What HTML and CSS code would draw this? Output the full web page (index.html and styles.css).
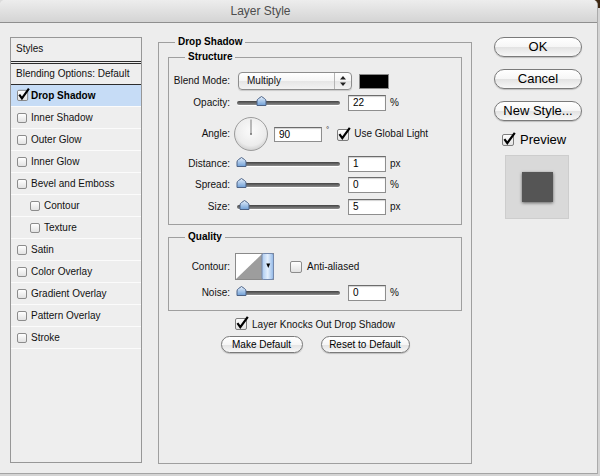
FILE: index.html
```html
<!DOCTYPE html>
<html lang="en">

<head>
	<meta charset="UTF-8">
	<meta name="viewport" content="width=device-width, initial-scale=1.0">
	<title>Layer Style</title>
	<link rel="stylesheet" href="styles.css">
</head>

<body>
	<svg class="defs" width="0" height="0">
		<defs>
			<linearGradient id="thumbFill" x1="0" y1="0" x2="0" y2="1">
				<stop offset="0" stop-color="#e6f0fc" />
				<stop offset="1" stop-color="#6f9fd6" />
			</linearGradient>
			<linearGradient id="aqua" x1="0" y1="0" x2="1" y2="0">
				<stop offset="0" stop-color="#a9c9f0" />
				<stop offset="0.5" stop-color="#e4effc" />
				<stop offset="1" stop-color="#8fb6e6" />
			</linearGradient>
			<radialGradient id="dialFill" cx="0.5" cy="0.4" r="0.6">
				<stop offset="0" stop-color="#fbfbfb" />
				<stop offset="0.75" stop-color="#ececec" />
				<stop offset="1" stop-color="#cfcfcf" />
			</radialGradient>
			<linearGradient id="boxFill" x1="0" y1="0" x2="0" y2="1">
				<stop offset="0" stop-color="#ffffff" />
				<stop offset="1" stop-color="#e2e2e2" />
			</linearGradient>
		</defs>
	</svg>

	<div class="window">
		<div class="titlebar">Layer Style</div>

		<div class="dialog">
			<!-- effects list -->
			<ul class="styles">
				<li class="styles__head">Styles</li>
				<li class="styles__blend">Blending Options: Default</li>
				<li class="styles__item styles__item--active">
					<svg class="check check--small" width="13" height="13" viewBox="0 0 14 14">
						<rect x="0.5" y="2.5" width="11" height="11" rx="1.5" fill="url(#boxFill)" stroke="#7d7d7d" />
						<path d="M2.4 7.2 L5.3 11.2 L12.8 0.8" fill="none" stroke="#000" stroke-width="2.3" />
					</svg>
					Drop Shadow
				</li>
				<li class="styles__item"><span class="box"></span>Inner Shadow</li>
				<li class="styles__item"><span class="box"></span>Outer Glow</li>
				<li class="styles__item"><span class="box"></span>Inner Glow</li>
				<li class="styles__item"><span class="box"></span>Bevel and Emboss</li>
				<li class="styles__item styles__item--sub"><span class="box"></span>Contour</li>
				<li class="styles__item styles__item--sub"><span class="box"></span>Texture</li>
				<li class="styles__item"><span class="box"></span>Satin</li>
				<li class="styles__item"><span class="box"></span>Color Overlay</li>
				<li class="styles__item"><span class="box"></span>Gradient Overlay</li>
				<li class="styles__item"><span class="box"></span>Pattern Overlay</li>
				<li class="styles__item"><span class="box"></span>Stroke</li>
			</ul>

			<!-- drop shadow settings -->
			<fieldset class="group group--main">
				<legend>Drop Shadow</legend>

				<fieldset class="group group--sub">
					<legend>Structure</legend>

					<div class="row row--blend">
						<span class="row__label">Blend Mode:</span>
						<div class="select">
							<span class="select__value">Multiply</span>
							<span class="select__arrows">
								<svg width="6" height="10" viewBox="0 0 6 10">
									<path d="M3 0 L6 3.5 H0 Z M0 6.5 H6 L3 10 Z" fill="#222" />
								</svg>
							</span>
						</div>
						<span class="swatch"></span>
					</div>

					<div class="row">
						<span class="row__label">Opacity:</span>
						<div class="slider">
							<svg class="slider__thumb" style="left:24px" width="11" height="10" viewBox="0 0 11 10">
								<path d="M1 9.5 V5 Q1 3.6 2.4 2.6 L5.5 0.5 L8.6 2.6 Q10 3.6 10 5 V9.5 Z" fill="url(#thumbFill)" stroke="#4d6386" />
							</svg>
						</div>
						<span class="field">22</span>
						<span class="unit">%</span>
					</div>

					<div class="row row--angle">
						<span class="row__label">Angle:</span>
						<svg class="dial" width="34" height="34" viewBox="0 0 34 34">
							<circle cx="17" cy="17" r="16.5" fill="url(#dialFill)" stroke="#9c9c9c" />
							<line x1="17" y1="17" x2="17" y2="2.5" stroke="#7a7a7a" />
							<circle cx="17" cy="17" r="1.1" fill="#7a7a7a" />
						</svg>
						<span class="field field--wide">90</span>
						<span class="deg">°</span>
						<span class="checkline">
							<svg class="check" width="14" height="14" viewBox="0 0 14 14">
								<rect x="0.5" y="2.5" width="11" height="11" rx="1.5" fill="url(#boxFill)" stroke="#7d7d7d" />
								<path d="M2.4 7.2 L5.3 11.2 L12.8 0.8" fill="none" stroke="#000" stroke-width="2.2" />
							</svg>
							Use Global Light
						</span>
					</div>

					<div class="row">
						<span class="row__label">Distance:</span>
						<div class="slider">
							<svg class="slider__thumb" style="left:4px" width="11" height="10" viewBox="0 0 11 10">
								<path d="M1 9.5 V5 Q1 3.6 2.4 2.6 L5.5 0.5 L8.6 2.6 Q10 3.6 10 5 V9.5 Z" fill="url(#thumbFill)" stroke="#4d6386" />
							</svg>
						</div>
						<span class="field">1</span>
						<span class="unit">px</span>
					</div>

					<div class="row">
						<span class="row__label">Spread:</span>
						<div class="slider">
							<svg class="slider__thumb" style="left:4px" width="11" height="10" viewBox="0 0 11 10">
								<path d="M1 9.5 V5 Q1 3.6 2.4 2.6 L5.5 0.5 L8.6 2.6 Q10 3.6 10 5 V9.5 Z" fill="url(#thumbFill)" stroke="#4d6386" />
							</svg>
						</div>
						<span class="field">0</span>
						<span class="unit">%</span>
					</div>

					<div class="row row--last">
						<span class="row__label">Size:</span>
						<div class="slider">
							<svg class="slider__thumb" style="left:7px" width="11" height="10" viewBox="0 0 11 10">
								<path d="M1 9.5 V5 Q1 3.6 2.4 2.6 L5.5 0.5 L8.6 2.6 Q10 3.6 10 5 V9.5 Z" fill="url(#thumbFill)" stroke="#4d6386" />
							</svg>
						</div>
						<span class="field">5</span>
						<span class="unit">px</span>
					</div>
				</fieldset>

				<fieldset class="group group--sub group--quality">
					<legend>Quality</legend>

					<div class="row row--contour">
						<span class="row__label">Contour:</span>
						<svg class="contour" width="39" height="27" viewBox="0 0 39 27">
							<rect x="0.5" y="0.5" width="38" height="26" fill="#fff" stroke="#8a8a8a" />
							<path d="M1 26 L27 1 V26 Z" fill="#9d9d9d" />
							<rect x="27" y="0.5" width="11.5" height="26" rx="1.5" fill="url(#aqua)" stroke="#7488ab" />
							<path d="M31.3 10.5 H35.2 L33.25 15 Z" fill="#000" />
						</svg>
						<span class="checkline checkline--plain">
							<span class="box box--big"></span>
							Anti-aliased
						</span>
					</div>

					<div class="row">
						<span class="row__label">Noise:</span>
						<div class="slider">
							<svg class="slider__thumb" style="left:4px" width="11" height="10" viewBox="0 0 11 10">
								<path d="M1 9.5 V5 Q1 3.6 2.4 2.6 L5.5 0.5 L8.6 2.6 Q10 3.6 10 5 V9.5 Z" fill="url(#thumbFill)" stroke="#4d6386" />
							</svg>
						</div>
						<span class="field">0</span>
						<span class="unit">%</span>
					</div>
				</fieldset>

				<div class="knockout">
					<svg class="check" width="14" height="14" viewBox="0 0 14 14">
						<rect x="0.5" y="2.5" width="11" height="11" rx="1.5" fill="url(#boxFill)" stroke="#7d7d7d" />
						<path d="M2.4 7.2 L5.3 11.2 L12.8 0.8" fill="none" stroke="#000" stroke-width="2.2" />
					</svg>
					Layer Knocks Out Drop Shadow
				</div>

				<div class="defaults">
					<button class="btn btn--make">Make Default</button>
					<button class="btn btn--reset">Reset to Default</button>
				</div>
			</fieldset>

			<!-- dialog actions -->
			<div class="actions">
				<button class="btn btn--big">OK</button>
				<button class="btn btn--big">Cancel</button>
				<button class="btn btn--big">New Style...</button>
				<div class="preview">
					<svg class="check" width="14" height="14" viewBox="0 0 14 14">
						<rect x="0.5" y="2.5" width="11" height="11" rx="1.5" fill="url(#boxFill)" stroke="#7d7d7d" />
						<path d="M2.4 7.2 L5.3 11.2 L12.8 0.8" fill="none" stroke="#000" stroke-width="2.2" />
					</svg>
					Preview
				</div>
				<div class="preview__box">
					<div class="preview__square"></div>
				</div>
			</div>
		</div>
	</div>
</body>

</html>
```

FILE: styles.css
```css
* {
	box-sizing: border-box;
}

html,
body {
	margin: 0;
}

body {
	width: 600px;
	height: 476px;
	overflow: hidden;
	background: linear-gradient(90deg, #dcdcdc 0, #d2d2d2 52%, #6e4410 56%, #c88a2a 66%, #8a5a18 76%, #e2a232 86%, #3a2410 100%) top / 100% 8px no-repeat, #d4d4d4;
	font: 10px/12px "Liberation Sans", Arial, sans-serif;
	color: #111;
}

.defs {
	display: block;
	width: 0;
	height: 0;
}

.window {
	width: 598px;
	height: 474px;
	background: #ededed;
	border-radius: 5px 5px 0 0;
	border-right: 1px solid #ababab;
	border-bottom: 1px solid #a4a4a4;
	overflow: hidden;
}

.titlebar {
	height: 23px;
	padding-right: 76px;
	border-bottom: 1px solid #8f8f8f;
	background: linear-gradient(#ededed, #d4d4d4);
	text-align: center;
	font-size: 12px;
	line-height: 23px;
	color: #4d4d4d;
}

.dialog {
	display: flex;
	align-items: flex-start;
	padding: 14px 0 0 10px;
}

/* styles list */

.styles {
	flex: none;
	width: 132px;
	height: 426px;
	margin: 0;
	padding: 0;
	list-style: none;
	border: 1px solid #979797;
	background: #eeeeee;
}

.styles__head {
	height: 26px;
	padding-left: 5px;
	line-height: 22px;
	border-bottom: 3px double #2c2c2c;
}

.styles__blend {
	height: 21px;
	padding-left: 5px;
	line-height: 20px;
	border-bottom: 1px solid #2c2c2c;
}

.styles__item {
	display: flex;
	align-items: center;
	gap: 4px;
	height: 22px;
	padding-left: 6px;
	border-bottom: 1px solid #fbfbfb;
}

.styles__item--sub {
	padding-left: 19px;
}

.styles__item--active {
	background: #c6dcf6;
	font-weight: bold;
	color: #000;
}

.check--small {
	margin-right: -3px;
	margin-top: -2px;
}

.box {
	flex: none;
	width: 10px;
	height: 10px;
	border: 1px solid #8c8c8c;
	border-radius: 2px;
	background: linear-gradient(#fff, #e2e2e2);
}

.box--big {
	width: 12px;
	height: 12px;
}

/* settings groups */

.group {
	min-width: 0;
	margin: 0;
	border: 1px solid #9f9f9f;
}

.group > legend {
	padding: 0 3px;
	font-weight: bold;
	line-height: 12px;
	color: #000;
}

.group--main {
	flex: none;
	width: 314px;
	height: 428px;
	margin: -1px 0 0 16px;
	padding: 3px 9px 0;
}

.group--main > legend {
	margin-left: 7px;
}

.group--sub {
	padding: 9px 0 9px;
}

.group--sub > legend {
	margin-left: 16px;
}

.group--quality {
	margin-top: 6px;
	padding-top: 10px;
}

.row {
	display: flex;
	align-items: center;
	height: 16px;
}

.row + .row {
	margin-top: 5px;
}

.row--blend {
	height: 18px;
}

.row--angle {
	height: 34px;
}

.row + .row--angle,
.row + .row--last {
	margin-top: 6px;
}

.row--contour {
	height: 27px;
}

.row__label {
	flex: none;
	width: 61px;
	margin-right: 6px;
	text-align: right;
}

.select {
	display: flex;
	width: 114px;
	height: 18px;
	margin-left: 2px;
	border: 1px solid #8d8d8d;
	border-radius: 4px;
	background: linear-gradient(#ffffff, #f5f5f5 50%, #e6e6e6 52%, #f2f2f2);
	box-shadow: 0 1px 1px rgba(0, 0, 0, 0.15);
}

.select__value {
	flex: 1;
	padding-left: 8px;
	line-height: 16px;
}

.select__arrows {
	display: flex;
	align-items: center;
	justify-content: center;
	width: 17px;
	border-left: 1px solid #b4b4b4;
}

.swatch {
	width: 30px;
	height: 15px;
	margin-left: 7px;
	border: 1px solid #8a8a8a;
	background: #000;
}

.slider {
	position: relative;
	flex: none;
	width: 103px;
	height: 4px;
	margin-left: 1px;
	border-radius: 2px;
	background: linear-gradient(#434343, #8e8e8e);
	box-shadow: 0 1px 0 #fff;
}

.slider__thumb {
	position: absolute;
	top: -5px;
	margin-left: -5px;
}

.field {
	flex: none;
	width: 38px;
	height: 16px;
	margin-left: 8px;
	padding-left: 4px;
	border: 1px solid #8e8e8e;
	border-top-color: #6c6c6c;
	background: #fff;
	box-shadow: inset 0 1px 1px rgba(0, 0, 0, 0.18);
	line-height: 14px;
	color: #000;
}

.field--wide {
	width: 48px;
	height: 15px;
	margin-left: 6px;
	line-height: 13px;
}

.unit {
	margin-left: 4px;
}

.dial {
	flex: none;
	margin-left: -2px;
}

.deg {
	align-self: flex-start;
	margin: 9px 0 0 4px;
	font-size: 8px;
	line-height: 8px;
}

.checkline {
	display: flex;
	align-items: center;
	gap: 3px;
	margin-left: 8px;
}

.checkline--plain {
	gap: 5px;
	margin-left: 16px;
}

.contour {
	flex: none;
	margin-left: -1px;
}

.knockout {
	display: flex;
	align-items: center;
	justify-content: center;
	gap: 3px;
	height: 13px;
	margin-top: 7px;
}

.knockout .check {
	margin-top: -3px;
}

.defaults {
	display: flex;
	justify-content: center;
	gap: 18px;
	margin-top: 5px;
}

/* buttons */

.btn {
	height: 17px;
	padding: 0;
	border: 1px solid #7a7a7a;
	border-radius: 9px;
	background: linear-gradient(#ffffff, #f6f6f6 50%, #e3e3e3 52%, #f7f7f7);
	box-shadow: 0 1px 1px rgba(0, 0, 0, 0.2);
	font: 10px/15px "Liberation Sans", Arial, sans-serif;
	color: #000;
}

.btn--make {
	width: 82px;
}

.btn--reset {
	width: 89px;
}

.actions {
	display: flex;
	flex-direction: column;
	flex: none;
	width: 88px;
	margin-left: 22px;
}

.btn--big {
	width: 88px;
	height: 20px;
	border-radius: 10px;
	font-size: 13px;
	line-height: 18px;
}

.btn--big + .btn--big {
	margin-top: 12px;
}

.preview {
	display: flex;
	align-items: center;
	gap: 4px;
	height: 13px;
	margin-top: 12px;
	padding-left: 8px;
	font-size: 13px;
	line-height: 13px;
	color: #000;
}

.preview .check {
	margin-top: -2px;
}

.preview__box {
	display: flex;
	align-items: center;
	justify-content: center;
	width: 64px;
	height: 64px;
	margin: 9px 0 0 11px;
	border: 1px solid #cdcdcd;
	background: #d9d9d9;
}

.preview__square {
	width: 31px;
	height: 30px;
	background: #555;
	box-shadow: 0 1px 3px rgba(0, 0, 0, 0.55);
}
```
